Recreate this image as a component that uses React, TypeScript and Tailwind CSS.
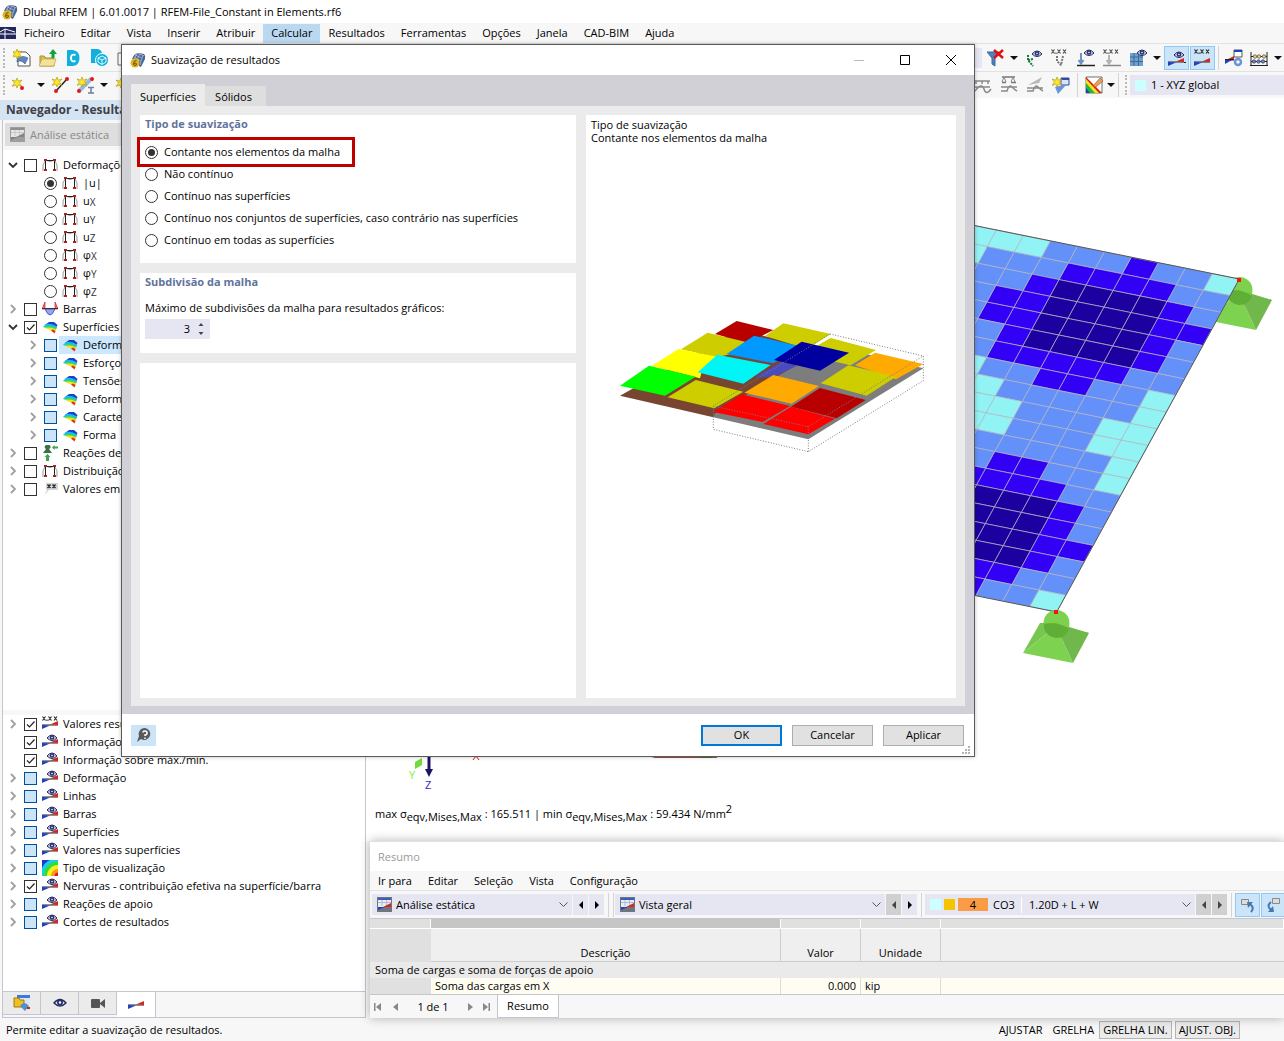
import { ReactNode } from "react";
import clsx from "clsx";

type IconName =
  | "frame"
  | "surface"
  | "eye"
  | "xxx"
  | "bars"
  | "reaction"
  | "flag"
  | "contour";

type TNode = {
  label: ReactNode;
  name: string;
  icon: IconName;
  level?: 0 | 1;
  open?: boolean;
  leaf?: boolean;
  radio?: boolean;
  checked?: boolean;
  partial?: boolean;
  selected?: boolean;
};

const MENU = [
  "Ficheiro",
  "Editar",
  "Vista",
  "Inserir",
  "Atribuir",
  "Calcular",
  "Resultados",
  "Ferramentas",
  "Opções",
  "Janela",
  "CAD-BIM",
  "Ajuda",
];

const sub = (a: string, b: string) => (
  <>
    {a}
    <span className="align-[-1px] text-[10px] text-[#333]">{b}</span>
  </>
);

const RESULTS: TNode[] = [
  { label: "Deformações globais", name: "def", icon: "frame", open: true },
  { label: "|u|", name: "u", icon: "frame", level: 1, radio: true, checked: true },
  { label: sub("u", "X"), name: "ux", icon: "frame", level: 1, radio: true },
  { label: sub("u", "Y"), name: "uy", icon: "frame", level: 1, radio: true },
  { label: sub("u", "Z"), name: "uz", icon: "frame", level: 1, radio: true },
  { label: sub("φ", "X"), name: "px", icon: "frame", level: 1, radio: true },
  { label: sub("φ", "Y"), name: "py", icon: "frame", level: 1, radio: true },
  { label: sub("φ", "Z"), name: "pz", icon: "frame", level: 1, radio: true },
  { label: "Barras", name: "bar", icon: "bars" },
  { label: "Superfícies", name: "sup", icon: "surface", open: true, checked: true },
  { label: "Deformações", name: "s1", icon: "surface", level: 1, partial: true, selected: true },
  { label: "Esforços", name: "s2", icon: "surface", level: 1, partial: true },
  { label: "Tensões", name: "s3", icon: "surface", level: 1, partial: true },
  { label: "Deformações", name: "s4", icon: "surface", level: 1, partial: true },
  { label: "Características", name: "s5", icon: "surface", level: 1, partial: true },
  { label: "Forma", name: "s6", icon: "surface", level: 1, partial: true },
  { label: "Reações de apoio", name: "rea", icon: "reaction" },
  { label: "Distribuição", name: "dis", icon: "frame" },
  { label: "Valores em", name: "val", icon: "flag" },
];

const DISPLAY: TNode[] = [
  { label: "Valores resultantes", name: "d1", icon: "xxx", checked: true },
  { label: "Informação", name: "d2", icon: "eye", checked: true, leaf: true },
  { label: "Informação sobre máx./mín.", name: "d3", icon: "eye", checked: true, leaf: true },
  { label: "Deformação", name: "d4", icon: "eye", partial: true },
  { label: "Linhas", name: "d5", icon: "eye", partial: true },
  { label: "Barras", name: "d6", icon: "eye", partial: true },
  { label: "Superfícies", name: "d7", icon: "eye", partial: true },
  { label: "Valores nas superfícies", name: "d8", icon: "eye", partial: true },
  { label: "Tipo de visualização", name: "d9", icon: "contour", partial: true },
  {
    label: "Nervuras - contribuição efetiva na superfície/barra",
    name: "d10",
    icon: "eye",
    checked: true,
  },
  { label: "Reações de apoio", name: "d11", icon: "eye", partial: true },
  { label: "Cortes de resultados", name: "d12", icon: "eye", partial: true },
];

const SMOOTHING = [
  "Contante nos elementos da malha",
  "Não contínuo",
  "Contínuo nas superfícies",
  "Contínuo nos conjuntos de superfícies, caso contrário nas superfícies",
  "Contínuo em todas as superfícies",
];

// one string per mesh row, read from the right edge to the left
const MESH = [
  "cbbpbbbccccc",
  "bbppppbbbccc",
  "bpddddpbbbbb",
  "ppddddppbbbb",
  "bpddddppbbbb",
  "bpddddpbbbbb",
  "bbpppppbbbbb",
  "cbbppbbccccc",
  "cbbbbbcccccc",
  "ccbbbccccccc",
  "ccbbbccccccc",
  "cbbbbbbccccc",
  "cbbppbbbbbbb",
  "bbpppppbbbbb",
  "bpdddddpbbbb",
  "bpdddddpbbbb",
  "ppdddddpbbbb",
  "bpddddppbbbb",
  "bbpppppbbbbb",
  "cbbppbbbbbbb",
];

const MESH_FILL: Record<string, string> = {
  c: "#91f3f3",
  b: "#6491f9",
  p: "#3200f5",
  d: "#1c00a0",
};

const PLATES: [string, string][] = [
  ["#b90000", "410,63 520,90 465,118 430,125 345,102"],
  ["#cdcd00", "550,70 692,102 640,135 590,137 495,108"],
  ["#cdcd00", "692,114 828,150 752,196 640,170 655,135"],
  ["#cdcd00", "323,98 435,125 390,163 350,172 243,148"],
  ["#ffaa00", "825,158 970,192 888,238 765,196"],
  ["#4b4bc0", "465,232 545,185 590,198 520,230"],
  ["#0099ff", "462,107 605,140 520,190 380,162"],
  ["#0000a0", "605,125 747,158 660,212 522,180"],
  ["#ffff00", "235,147 360,172 305,215 300,235 155,198"],
  ["#00f5f5", "352,164 512,195 430,251 293,217"],
  ["#cdcd00", "745,196 888,230 800,287 662,250"],
  ["#00ff00", "147,197 287,230 195,287 60,257"],
  ["#cdcd00", "287,240 430,275 343,325 203,292"],
  ["#ffaa00", "520,225 657,258 575,311 433,278"],
  ["#ff0000", "425,283 570,318 488,366 340,336"],
  ["#b90000", "660,264 797,300 710,355 573,320"],
  ["#ff0000", "573,320 705,356 625,403 490,372"],
];

function Eye({ x = 0, y = 0 }: { x?: number; y?: number }) {
  return (
    <g transform={`translate(${x} ${y})`}>
      <path d="M0 4Q5 -2 10 4Q5 9 0 4Z" fill="#c9cde6" stroke="#23285c" />
      <circle cx="5" cy="3.5" r="2.3" fill="#2a3172" />
      <circle cx="5" cy="3.5" r=".8" fill="#fff" />
    </g>
  );
}

function Wedge({ y = 0 }: { y?: number }) {
  return (
    <g transform={`translate(0 ${y})`}>
      <path d="M0 6.500H16V5.500H0Z" fill="#222" />
      <path d="M8 5.500L16 2V6Z" fill="#d2281e" />
      <path d="M0 6L8 6.500L0 10Z" fill="#2340c0" />
    </g>
  );
}

// the "x.xx" mark of the value icons
function Digits({ color = "#222" }: { color?: string }) {
  return (
    <path
      d="M.5 .5L3.500 4.500M3.500 .5L.5 4.500M5 3.500V5M6.500 .5L9.500 4.500M9.500 .5L6.500 4.500M12 .5L15 4.500M15 .5L12 4.500"
      stroke={color}
      strokeWidth="1.100"
      fill="none"
    />
  );
}

function TreeIcon({ icon }: { icon: IconName }) {
  return (
    <svg viewBox="0 0 16 16" className="h-4 w-4 shrink-0" aria-hidden>
      {icon === "frame" && (
        <>
          <path d="M1 14Q0 7 3 4M15 14Q16 7 13 4M3 3Q8 6 13 3" fill="none" stroke="#9a9a9a" />
          <path d="M3.500 13V3.500H12.500V13" fill="none" stroke="#222" />
          <path d="M2 2h3v2H2zM11 2h3v2h-3zM2 12h3v2H2zM11 12h3v2h-3z" fill="#b02020" />
        </>
      )}
      {icon === "surface" && (
        <>
          <path d="M3 6L7 3H12L15.500 6L14 9Z" fill="#1c40c8" />
          <path d="M1 8L4 5Q10 4 15 7.500L14.500 9.500L8 9Z" fill="#18b8f0" />
          <path d="M1 8Q8 5.500 14.500 9L14 11L8 9.500Z" fill="#3cdc50" />
          <path d="M3 9Q9 7.500 14 10.500L13.500 12.500L9 11.500Z" fill="#f5e11e" />
          <path d="M9 11.500L11 10.500L13.500 12L12.500 14.500Z" fill="#e03018" />
        </>
      )}
      {(icon === "eye" || icon === "xxx") && <Wedge y={3} />}
      {icon === "eye" && <Eye x={5} y={0} />}
      {icon === "xxx" && <Digits />}
      {icon === "bars" && (
        <>
          <path d="M0 8L3 8V1ZM16 8L13 8V1Z" fill="#f07070" stroke="#c82020" strokeWidth=".7" />
          <path d="M3 8Q8 20 13 8Z" fill="#9aa4f0" stroke="#3040c0" strokeWidth=".8" />
          <path d="M0 7.500H16" stroke="#333" />
        </>
      )}
      {icon === "reaction" && (
        <g fill="#3aa655">
          <path d="M6 0A2 2 0 0 1 7 4L10 8H1L4 4A2 2 0 0 1 6 0Z" fill="#3c7048" />
          <path d="M10 2.500L12.500 0V1.500H16V3.500H12.500V5Z" />
          <path d="M5.500 9L8.500 12H7V16H4V12H2.500Z" />
        </g>
      )}
      {icon === "flag" && (
        <>
          <path d="M4 2H16V9H7L2 15L5 9H4Z" fill="#d6d6d6" />
          <path
            d="M5.500 3.500L8.500 7M8.500 3.500L5.500 7M10.500 3.500L13.500 7M13.500 3.500L10.500 7"
            stroke="#222"
            strokeWidth="1.300"
          />
        </>
      )}
      {icon === "contour" && (
        <>
          <rect width="16" height="16" fill="#2038d8" />
          <circle cx="16" cy="16" r="18" fill="#18d0e8" />
          <circle cx="16" cy="16" r="14.500" fill="#32dc3c" />
          <circle cx="16" cy="16" r="11" fill="#f5f01e" />
          <circle cx="16" cy="16" r="7" fill="#f59a1e" />
          <circle cx="16" cy="16" r="3.500" fill="#e02010" />
        </>
      )}
    </svg>
  );
}

function AppIcon() {
  return (
    <svg viewBox="0 0 16 16" className="h-4 w-4 shrink-0" aria-hidden>
      <path d="M2 7Q4 1 9 1L14 2Q16 4 15 7L11 15L9 14L9 8Z" fill="#4a6590" />
      <path
        d="M5 3L12 6M8 1L14 4M4 5L11 9M7 2L4 7M10 2L7 8M13 3L10 13"
        stroke="#b8c8e0"
        strokeWidth=".7"
      />
      <circle cx="5" cy="11" r="4.500" fill="#e0b428" />
      <path
        d="M6.500 8.500Q3.500 8.500 3.500 11.500Q3.500 13.500 5 13.500Q6.500 13.500 6.500 12T3.800 11.500"
        fill="none"
        stroke="#6b5000"
      />
    </svg>
  );
}

function Caret() {
  return (
    <svg viewBox="0 0 8 4" className="h-1 w-2 shrink-0" aria-hidden>
      <path d="M0 0H8L4 4Z" fill="#111" />
    </svg>
  );
}

function Star({ x = 5, y = 5 }: { x?: number; y?: number }) {
  return (
    <path
      transform={`translate(${x} ${y})`}
      d="M0 -5L1.300 -1.800L5 -3L2.500 0L5 3.500L1.300 2L0 5L-1.300 2L-5 3.500L-2.500 0L-5 -3L-1.300 -1.800Z"
      fill="#ffe628"
      stroke="#a89000"
      strokeWidth=".6"
    />
  );
}

type ToolProps = {
  label: string;
  className?: string;
  active?: boolean;
  children: ReactNode;
};

function Tool({ label, className = "w-[26px]", active, children }: ToolProps) {
  return (
    <button
      type="button"
      aria-label={label}
      className={clsx(
        "flex h-6 shrink-0 items-center justify-center",
        active && "border border-[#90c8f6] bg-[#cbe4f8]",
        className
      )}
    >
      {children}
    </button>
  );
}

function Pic({ children, wide }: { children: ReactNode; wide?: boolean }) {
  return (
    <svg
      viewBox={wide ? "0 0 18 18" : "0 0 16 16"}
      className={wide ? "h-[18px] w-[18px]" : "h-4 w-4"}
      fill="none"
      aria-hidden
    >
      {children}
    </svg>
  );
}

const Sep = ({ className = "mx-[3px]" }: { className?: string }) => (
  <span className={clsx("h-6 w-px shrink-0 bg-[#d4d4d4]", className)} />
);

const Grip = () => (
  <span className="mx-[3px] h-5 w-0 shrink-0 border-l-2 border-dotted border-[#b8b8b8]" />
);

function MainToolbar() {
  return (
    <div className="flex h-7 items-center border-t border-[#e2e2e2]">
      <Grip />
      <Tool label="Novo" className="ml-px w-[26px]">
        <Pic wide>
          <path d="M5 3H13L17 7V17H5Z" fill="#fff" stroke="#555" />
          <path
            d="M4 11Q8 5 15 9L12 15Q8 10 4 13Z"
            fill="#5d86c2"
            stroke="#34588e"
            strokeWidth=".6"
          />
          <Star x={4} y={5} />
        </Pic>
      </Tool>
      <Tool label="Abrir">
        <Pic wide>
          <path d="M1 17V7H5L7 9H15V17Z" fill="#d8c050" stroke="#a8902c" />
          <path d="M0 17L3 10H17L15 17Z" fill="#f2e29a" stroke="#b8a03c" strokeWidth=".6" />
          <path d="M14 0L18 5H15.500V9H12.500V5H10Z" fill="#12a040" />
        </Pic>
      </Tool>
      <Tool label="Dlubal Center" className="w-6">
        <Pic>
          <path d="M2 0H8Q14.500 1 14.500 8T8 16H2Z" fill="#10b0dc" />
          <path d="M10.500 5Q6 3.500 6 8T10.500 11" stroke="#fff" strokeWidth="2" />
        </Pic>
      </Tool>
      <Tool label="Modelos" className="w-7">
        <Pic wide>
          <path d="M1 0H8Q13 1 12 8L6 14H1Z" fill="#10b0dc" />
          <circle cx="12" cy="11" r="6.500" fill="#10b0dc" stroke="#fff" />
          <path
            d="M12 7L16 9V13L12 15.500L8 13V9ZM8 9L12 11L16 9M12 11V15"
            stroke="#e8f8fd"
          />
        </Pic>
      </Tool>
      <Tool label="Bloco" className="w-5">
        <Pic>
          <path d="M3 3H15V15H3Z" fill="#fff" stroke="#666" />
        </Pic>
      </Tool>
      <div className="flex flex-1 items-center justify-end">
        <span className="mr-[3px] h-5 w-3 bg-[#e6e6f2]" />
        <Tool label="Filtro" className="w-[22px]">
          <Pic wide>
            <path d="M0 3H12L8 9V17L5 15V9Z" fill="#4f81bd" stroke="#3a6aa5" />
            <path d="M7 1L16 9M16 1L7 9" stroke="#e01010" strokeWidth="2.500" />
          </Pic>
        </Tool>
        <Tool label="Mais filtros" className="w-[14px]">
          <Caret />
        </Tool>
        <Tool label="Mostrar cargas">
          <Pic wide>
            <Eye x={7} y={1} />
            <path
              d="M3 6V11L8 17M3 11L8 10"
              stroke="#16783c"
              strokeWidth="2"
              strokeDasharray="2 1"
            />
          </Pic>
        </Tool>
        <Tool label="Valores das cargas">
          <Pic wide>
            <Digits color="#444" />
            <path
              d="M6 7V12L11 17M12 7L10 16"
              stroke="#777"
              strokeWidth="2"
              strokeDasharray="2 1"
            />
          </Pic>
        </Tool>
        <Tool label="Mostrar reações">
          <Pic wide>
            <Eye x={7} y={0} />
            <path d="M4 4V13M1.500 11L4 14.500L6.500 11" stroke="#6c94c0" strokeWidth="2" />
            <path d="M0 16.500H18" stroke="#222" strokeWidth="1.500" />
          </Pic>
        </Tool>
        <Tool label="Valores das reações">
          <Pic wide>
            <Digits color="#444" />
            <path d="M6 6V13M3.500 11L6 14.500L8.500 11" stroke="#b4b4b4" strokeWidth="2" />
            <path d="M0 16.500H18" stroke="#888" strokeWidth="1.500" />
          </Pic>
        </Tool>
        <Tool label="Malha">
          <Pic wide>
            <path d="M1 4H14V17H1Z" fill="#6da0cc" />
            <path d="M1 8H14M1 12.500H14M5 4V17M9.500 4V17" stroke="#3d6a94" />
            <Eye x={8} y={0} />
          </Pic>
        </Tool>
        <Tool label="Opções da malha" className="w-3">
          <Caret />
        </Tool>
        <Tool label="Mostrar resultados" active className="ml-px w-[25px]">
          <Pic wide>
            <Wedge y={7} />
            <path d="M16 13.500H18" stroke="#222" />
            <Eye x={6} y={2} />
          </Pic>
        </Tool>
        <Tool label="Mostrar valores" active className="ml-px w-[25px]">
          <Pic wide>
            <Digits />
            <Wedge y={7} />
          </Pic>
        </Tool>
        <Sep />
        <Tool label="Configurar resultados" className="w-6">
          <Pic wide>
            <path d="M9 1H17V8H9Z" fill="#fff" stroke="#555" />
            <path d="M9 1H17V3H9Z" fill="#2340c0" />
            <path d="M0 10H9V11.500H0Z" fill="#222" />
            <path d="M3 10H9V7Z" fill="#d2281e" />
            <path d="M0 11H7L0 15Z" fill="#2340c0" />
            <circle cx="13" cy="13" r="3" stroke="#6a94d8" strokeWidth="2.500" />
          </Pic>
        </Tool>
        <Tool label="Ábaco" className="w-[26px]">
          <Pic wide>
            <path d="M1 3V17M17 3V17M1 7.500H17M1 12.500H17M0 16.500H18" stroke="#222" />
            <g fill="#f0d880" stroke="#444" strokeWidth=".7">
              <circle cx="5" cy="7.500" r="1.700" />
              <circle cx="9" cy="7.500" r="1.700" />
              <circle cx="14" cy="7.500" r="1.700" />
            </g>
            <g fill="#6a8ae0" stroke="#333" strokeWidth=".7">
              <circle cx="4" cy="12.500" r="1.700" />
              <circle cx="8.500" cy="12.500" r="1.700" />
              <circle cx="13" cy="12.500" r="1.700" />
            </g>
          </Pic>
        </Tool>
        <Tool label="Mais" className="w-3">
          <Caret />
        </Tool>
      </div>
    </div>
  );
}

function InsertToolbar() {
  return (
    <div className="flex h-[27px] items-center border-t border-[#e2e2e2]">
      <Grip />
      <Tool label="Novo nó" className="w-6">
        <Pic>
          <Star x={5} y={6} />
          <circle cx="10" cy="11" r="2" fill="#e01818" />
        </Pic>
      </Tool>
      <Tool label="Opções do nó" className="w-[18px]">
        <Caret />
      </Tool>
      <Tool label="Nova linha" className="w-5">
        <Pic wide>
          <path d="M5 15L16 3" stroke="#222" strokeWidth="1.500" />
          <Star x={6} y={6} />
          <circle cx="5" cy="15" r="2" fill="#e01818" />
          <circle cx="16" cy="3" r="2" fill="#e01818" />
        </Pic>
      </Tool>
      <Tool label="Nova barra" className="ml-[6px] w-5">
        <Pic wide>
          <path d="M2 15L14 3" stroke="#9db8dc" strokeWidth="4" />
          <Star x={5} y={6} />
          <circle cx="2" cy="15" r="2" fill="#e01818" />
          <circle cx="15" cy="3" r="2" fill="#e01818" />
          <path
            d="M11 11.500H17M11 17H17M14 11.500V17"
            stroke="#6a80a8"
            strokeWidth="1.500"
          />
        </Pic>
      </Tool>
      <Tool label="Opções da barra" className="w-4">
        <Caret />
      </Tool>
      <Tool label="Nova superfície" className="w-5">
        <Pic>
          <Star x={7} y={6} />
        </Pic>
      </Tool>
      <div className="flex flex-1 items-center justify-end">
        <Tool label="Apoio linear">
          <Pic wide>
            <path
              d="M0 5H16M0 11H16M2 5V8M8 5V8M14 5V8M1 15Q8 6 10 13T17 13"
              stroke="#8a8a8a"
              strokeWidth="1.500"
            />
          </Pic>
        </Tool>
        <Tool label="Apoio de superfície">
          <Pic wide>
            <path d="M2 1H15M2 6.500H6M11 6.500H16" stroke="#777" strokeWidth="1.500" />
            <path d="M4 1L2 6M4 1L6 6M13 1L11 6M13 1L15 6" stroke="#8a8a8a" />
            <path d="M1 11H17M1 15H7Q9 8 12 11T17 15" stroke="#8a8a8a" strokeWidth="1.500" />
          </Pic>
        </Tool>
        <Tool label="Secção">
          <Pic wide>
            <path d="M2 9L16 1L13 7Z" fill="#b8b8b8" />
            <path
              d="M1 15H7Q9 8 12 11T17 15M1 12H17"
              stroke="#8a8a8a"
              strokeWidth="1.500"
            />
          </Pic>
        </Tool>
        <Tool label="Novo corte">
          <Pic wide>
            <path d="M9 2H17V9H9Z" fill="#d8e4f8" stroke="#3448a0" />
            <path d="M9 2H17V4H9Z" fill="#3448a0" />
            <path d="M3 11L15 8L6 18Z" fill="#6a94e0" />
            <Star x={5} y={6} />
          </Pic>
        </Tool>
        <Sep />
        <Tool label="Escala de cores">
          <Pic wide>
            <path d="M1 1H17V17H1Z" fill="#fff" stroke="#333" strokeWidth=".7" />
            <path d="M1 1V17H17Z" fill="#e02010" />
            <path d="M1 3L14 17H1Z" fill="#f5e11e" />
            <path d="M1 7L10 17H1Z" fill="#22b83c" />
            <path d="M1 12L5 17H1Z" fill="#2340c0" />
            <path
              d="M8 10L15 2L18 5L11 11Z"
              fill="#e8a060"
              stroke="#a05020"
              strokeWidth=".6"
            />
          </Pic>
        </Tool>
        <Tool label="Opções de cores" className="w-2">
          <Caret />
        </Tool>
        <Sep />
        <Grip />
        <button
          type="button"
          className="flex h-5 w-[154px] items-center bg-[#e6e6f2] pl-[5px] text-left"
        >
          <span className="mr-[5px] h-[11px] w-[11px] bg-[#ccffff]" />1 - XYZ global
        </button>
      </div>
    </div>
  );
}

function Chevron({ open, hidden }: { open?: boolean; hidden?: boolean }) {
  return (
    <svg
      viewBox="0 0 14 14"
      className={clsx("mr-[2px] h-[14px] w-[14px] shrink-0", hidden && "invisible")}
      fill="none"
      aria-hidden
    >
      {open ? (
        <path d="M3 5L7 9L11 5" stroke="#333" strokeWidth="1.800" />
      ) : (
        <path d="M5 3L9 7L5 11" stroke="#a0a0a0" strokeWidth="1.800" />
      )}
    </svg>
  );
}

function Check({ id, checked, partial }: { id: string; checked?: boolean; partial?: boolean }) {
  return (
    <span className="grid shrink-0">
      <input
        id={id}
        type="checkbox"
        defaultChecked={checked}
        className={clsx(
          "peer col-start-1 row-start-1 h-[13px] w-[13px] appearance-none border",
          partial ? "border-[#00509b] bg-[#cce4f7]" : "border-[#333] bg-white"
        )}
      />
      <svg
        viewBox="0 0 13 13"
        className="pointer-events-none invisible col-start-1 row-start-1 h-[13px] w-[13px] peer-checked:visible"
        fill="none"
        aria-hidden
      >
        <path d="M3 6.500L5.500 9L10.500 3.500" stroke="#222" strokeWidth="1.200" />
      </svg>
    </span>
  );
}

function Radio({ id, name, checked }: { id: string; name: string; checked?: boolean }) {
  return (
    <input
      id={id}
      type="radio"
      name={name}
      defaultChecked={checked}
      className="h-[13px] w-[13px] shrink-0 appearance-none rounded-full border border-[#333] bg-white bg-clip-content p-[2px] checked:bg-[#333]"
    />
  );
}

function TreeRow({ node }: { node: TNode }) {
  const id = `tree-${node.name}`;
  return (
    <li
      className={clsx(
        "flex h-[18px] items-center gap-[2px] whitespace-nowrap",
        node.level === 1 ? "pl-[23px]" : "pl-[3px]"
      )}
    >
      <Chevron open={node.open} hidden={node.leaf || node.radio} />
      {node.radio ? (
        <Radio id={id} name="deformation" checked={node.checked} />
      ) : (
        <Check id={id} checked={node.checked} partial={node.partial} />
      )}
      <label
        htmlFor={id}
        className={clsx(
          "flex h-[18px] flex-1 items-center gap-[5px] pl-[3px]",
          node.selected && "bg-[#cce8ff]"
        )}
      >
        <TreeIcon icon={node.icon} />
        <span>{node.label}</span>
      </label>
    </li>
  );
}

function ResultIcon({ gray }: { gray?: boolean }) {
  return (
    <svg
      viewBox="0 0 15 15"
      className={clsx("h-[15px] w-[15px] shrink-0", gray && "opacity-60 grayscale")}
      aria-hidden
    >
      <rect width="15" height="15" fill="#707680" />
      <path d="M1 1H14V10H1Z" fill="#e8ecf4" />
      <path d="M1 1H14V3H1Z" fill="#3c5cc0" />
      <path d="M1 5.500H14M5 3V9M9.500 3V9" stroke="#b4bccc" />
      <path d="M14 6V10H6Z" fill="#d2281e" />
      <path d="M1 10H8L1 13Z" fill="#2340c0" />
    </svg>
  );
}

function Navigator() {
  const tab =
    "flex h-[23px] w-[38px] items-center justify-center border-r border-b border-[#c5c5d0] bg-[#ebebeb]";
  return (
    <aside className="flex w-[366px] shrink-0 flex-col pt-[2px]">
      <h2 className="h-5 bg-[#d5e4f2] pl-[6px] text-[12px] leading-5 font-bold text-[#404048]">
        Navegador - Resultados
      </h2>
      <div className="ml-[2px] flex flex-1 flex-col border-x border-b border-[#c5c5d0] bg-white">
        <div className="bg-[#f7f7f7] px-[2px] pt-[3px] pb-1">
          <button
            type="button"
            disabled
            className="flex h-[23px] w-full items-center gap-[5px] bg-[#dedede] pl-[5px] text-[#888]"
          >
            <ResultIcon gray />
            Análise estática
          </button>
        </div>
        <ul className="flex-1 pt-[6px]">
          {RESULTS.map((n) => (
            <TreeRow key={n.name} node={n} />
          ))}
        </ul>
        <div className="h-[5px] bg-[#f7f7f7]" />
        <ul className="pb-[60px]">
          {DISPLAY.map((n) => (
            <TreeRow key={n.name} node={n} />
          ))}
        </ul>
        <div className="flex h-[26px] items-start border-t border-[#c5c5d0] bg-[#f7f7f7]">
          <button type="button" aria-label="Dados" className={tab}>
            <Pic wide>
              <path d="M4 1H17V11H4Z" fill="#dde6f8" />
              <path d="M4 1H17V4H4Z" fill="#3c78e0" />
              <path d="M1 4H6L7 6H11V13H1Z" fill="#f0c020" stroke="#a07808" />
              <path d="M7 12Q11 6 16 12L12 17Z" fill="#5090d0" />
              <path d="M14 13H17V15H14Z" fill="#e01818" />
            </Pic>
          </button>
          <button type="button" aria-label="Exibir" className={tab}>
            <Pic>
              <path
                d="M2 8Q8 1 14 8Q8 14 2 8Z"
                fill="#dfe3f2"
                stroke="#23285c"
                strokeWidth="1.300"
              />
              <circle cx="8" cy="7.500" r="3" fill="#2a3172" />
              <circle cx="8" cy="7.500" r="1.200" fill="#fff" />
            </Pic>
          </button>
          <button type="button" aria-label="Vistas" className={tab}>
            <Pic>
              <rect x="1" y="4" width="9" height="9" rx="1" fill="#555" />
              <path d="M10 8L15 4V13L10 9Z" fill="#555" />
            </Pic>
          </button>
          <button
            type="button"
            aria-label="Resultados"
            className="flex h-[25px] w-[39px] items-center justify-center border-r border-[#c5c5d0] bg-white"
          >
            <Pic>
              <Wedge y={2} />
            </Pic>
          </button>
        </div>
      </div>
    </aside>
  );
}

function meshPoint(i: number, j: number) {
  const x = 1239.3 - 27 * i - 9.13 * j;
  const y = 279 - 5.45 * i + 16.65 * j;
  return `${x.toFixed(1)},${y.toFixed(1)}`;
}

function Support({ dx = 0, dy = 0 }: { dx?: number; dy?: number }) {
  return (
    <g transform={`translate(${dx} ${dy})`}>
      <path d="M1040 623L1056 623L1089 633L1056 640Z" fill="#70b84b" />
      <path d="M1056 626L1040 623L1023 653Z" fill="#78c64f" />
      <path d="M1056 626L1023 653L1073 663Z" fill="#7dd350" />
      <path d="M1056 626L1073 663L1089 633Z" fill="#70b84b" />
      <circle cx="1056.500" cy="623" r="13" fill="#6fcc3c" fillOpacity=".9" />
      <path d="M1044 624Q1057 621 1069 629A13 13 0 0 1 1044 628Z" fill="#5fae35" />
    </g>
  );
}

function Model() {
  return (
    <svg
      viewBox="966 98 318 743"
      className="col-start-1 row-start-1 h-[743px] w-[318px] justify-self-end"
      role="img"
      aria-label="Tensões na superfície"
    >
      <Support dx={183} dy={-333} />
      {MESH.map((row, j) =>
        row.split("").map((c, i) => (
          <polygon
            key={`${i}-${j}`}
            points={[
              meshPoint(i, j),
              meshPoint(i + 1, j),
              meshPoint(i + 1, j + 1),
              meshPoint(i, j + 1),
            ].join(" ")}
            fill={MESH_FILL[c]}
            stroke="#b4b4be"
            strokeWidth=".7"
          />
        ))
      )}
      <polyline
        points={[meshPoint(12, 0), meshPoint(0, 0), meshPoint(0, 20), meshPoint(12, 20)].join(" ")}
        fill="none"
        stroke="#555"
      />
      <Support />
      <rect x="1237" y="278" width="4" height="4" fill="#f01414" />
      <rect x="1054" y="610" width="4" height="4" fill="#f01414" />
    </svg>
  );
}

function Viewport() {
  return (
    <div className="grid flex-1 overflow-hidden bg-white">
      <Model />
      <div className="col-start-1 row-start-1 self-end pb-[15px] pl-[9px]">
        <svg viewBox="375 740 360 55" className="h-[55px] w-[360px]" aria-hidden>
          <path d="M429 740V770" stroke="#1c1464" strokeWidth="3" />
          <path d="M425 769H433L429 777Z" fill="#1c1464" />
          <path d="M422 758L415 762V769L422 765Z" fill="#6fdc3c" />
          <path d="M648 756H720L716 758H655Z" fill="#a05050" />
          <path d="M698 756H712V758H700Z" fill="#507020" />
          <path d="M473 760L476 756L479 760" stroke="#e01818" fill="none" />
          <text x="409" y="779" fontSize="11" fill="#7cf03c">
            Y
          </text>
          <text x="425" y="789" fontSize="11" fill="#3c28c8">
            Z
          </text>
        </svg>
        <p className="mt-[7px] h-6 leading-6 whitespace-nowrap">
          max σ<sub className="text-[11px]">eqv,Mises,Max</sub> : 165.511 | min σ
          <sub className="text-[11px]">eqv,Mises,Max</sub> : 59.434 N/mm
          <sup className="text-[11px]">2</sup>
        </p>
      </div>
    </div>
  );
}

function Arrow({ left, dim }: { left?: boolean; dim?: boolean }) {
  return (
    <button
      type="button"
      aria-label={left ? "Anterior" : "Seguinte"}
      className={clsx(
        "mr-px flex h-[21px] w-[15px] shrink-0 items-center justify-center",
        dim ? "bg-[#d0d0d0]" : "bg-[#e6e6f2]"
      )}
    >
      <svg viewBox="0 0 4 8" className="h-2 w-1" aria-hidden>
        <path d={left ? "M4 0V8L0 4Z" : "M0 0V8L4 4Z"} fill={dim ? "#444" : "#000"} />
      </svg>
    </button>
  );
}

function DropMark() {
  return (
    <svg viewBox="0 0 9 5" className="mr-1 ml-auto h-[5px] w-[9px]" fill="none" aria-hidden>
      <path d="M.5 .5L4.500 4.500L8.500 .5" stroke="#555" />
    </svg>
  );
}

function SummaryPanel() {
  const combo = "mr-px flex h-[21px] shrink-0 items-center bg-[#e6e6f2] pl-[5px]";
  const pager = "flex w-[16px] items-center justify-center";
  const th = "border-r border-b border-[#cdcdcd] align-bottom font-normal";
  const td = "border-r border-[#dcdcdc]";
  return (
    <section className="z-10 ml-1 flex flex-col border-t border-[#e0e0e0] bg-[#f7f7f7] shadow-[0_0_10px_rgba(0,0,0,0.3)]">
      <h2 className="h-[29px] bg-white pl-2 leading-[30px] text-[#999]">Resumo</h2>
      <nav className="flex h-5 items-center gap-4 border-b border-[#e4e4e4] pl-2">
        {["Ir para", "Editar", "Seleção", "Vista", "Configuração"].map((m) => (
          <button key={m} type="button">
            {m}
          </button>
        ))}
      </nav>
      <div className="flex h-[27px] items-center overflow-hidden pl-[2px]">
        <button type="button" className={clsx(combo, "w-[200px]")}>
          <ResultIcon />
          <span className="ml-1">Análise estática</span>
          <DropMark />
        </button>
        <Arrow left />
        <Arrow />
        <Sep />
        <Sep className="mx-px" />
        <button type="button" className={clsx(combo, "w-[270px]")}>
          <ResultIcon />
          <span className="ml-1">Vista geral</span>
          <DropMark />
        </button>
        <Arrow left dim />
        <Arrow />
        <Sep />
        <button type="button" className={clsx(combo, "w-[270px]")}>
          <span className="h-[11px] w-[11px] bg-[#ccffff]" />
          <span className="ml-[3px] h-[11px] w-[11px] bg-[#f5c400]" />
          <span className="ml-[3px] h-[13px] w-[30px] bg-[#fa9b46] text-center leading-[13px]">
            4
          </span>
          <span className="ml-[5px] w-[29px] border-r border-white text-left">CO3</span>
          <span className="ml-[7px]">1.20D + L + W</span>
          <DropMark />
        </button>
        <Arrow left dim />
        <Arrow dim />
        <Sep />
        <Tool label="Sincronizar seleção" active className="w-[25px]">
          <Pic>
            <path d="M1.500 2.500H8.500V7.500H1.500Z" fill="#ddd" stroke="#888" />
            <path d="M11 15Q15 11 10 7" stroke="#4678b0" strokeWidth="2" />
            <path d="M7 5L13 5L8 11Z" fill="#4678b0" />
          </Pic>
        </Tool>
        <Tool label="Sincronizar vista" active className="ml-px w-[25px]">
          <Pic>
            <path d="M6.500 1.500H13.500V6.500H6.500Z" fill="#ddd" stroke="#888" />
            <path d="M5 5Q0 9 5 13" stroke="#4678b0" strokeWidth="2" />
            <path d="M8 15L2 15L7 9Z" fill="#4678b0" />
          </Pic>
        </Tool>
      </div>
      <table className="w-full table-fixed border-separate border-spacing-0 border-y border-[#c5c5d0]">
        <colgroup>
          <col className="w-[61px]" />
          <col className="w-[350px]" />
          <col className="w-[80px]" />
          <col className="w-[80px]" />
          <col />
        </colgroup>
        <thead>
          <tr className="h-[10px] bg-[#e0e0e0]">
            {["a", "b", "c", "d", "e"].map((k) => (
              <td
                key={k}
                className={clsx("border-r border-b border-white", k === "b" && "bg-[#c6c6c6]")}
              />
            ))}
          </tr>
          <tr className="h-[33px] bg-[#efefef]">
            <td className="bg-[#e0e0e0]" />
            <th className={th}>Descrição</th>
            <th className={th}>Valor</th>
            <th className={th}>Unidade</th>
            <td className="border-b border-[#cdcdcd]" />
          </tr>
        </thead>
        <tbody>
          <tr className="h-4 bg-[#eaeaea]">
            <td colSpan={5} className="pl-[5px] leading-4 whitespace-nowrap">
              Soma de cargas e soma de forças de apoio
            </td>
          </tr>
          <tr className="h-4 bg-[#fffdf2]">
            <td className="bg-[#e0e0e0]" />
            <td className={clsx(td, "pl-1 leading-4")}>Soma das cargas em X</td>
            <td className={clsx(td, "pr-1 text-right leading-4")}>0.000</td>
            <td className={clsx(td, "pl-1 leading-4")}>kip</td>
            <td />
          </tr>
        </tbody>
      </table>
      <div className="flex h-[23px] items-stretch">
        <button type="button" aria-label="Primeira" className={pager}>
          <svg viewBox="0 0 8 8" className="h-2 w-2" fill="#888" aria-hidden>
            <path d="M0 0H1.500V8H0ZM7 0V8L2 4Z" />
          </svg>
        </button>
        <button type="button" aria-label="Página anterior" className={clsx(pager, "ml-[2px]")}>
          <svg viewBox="0 0 8 8" className="h-2 w-2" fill="#888" aria-hidden>
            <path d="M6 0V8L1 4Z" />
          </svg>
        </button>
        <span className="w-[58px] self-center text-center">1 de 1</span>
        <button type="button" aria-label="Página seguinte" className={pager}>
          <svg viewBox="0 0 8 8" className="h-2 w-2" fill="#888" aria-hidden>
            <path d="M2 0V8L7 4Z" />
          </svg>
        </button>
        <button type="button" aria-label="Última" className={pager}>
          <svg viewBox="0 0 8 8" className="h-2 w-2" fill="#888" aria-hidden>
            <path d="M1 0V8L6 4ZM6.500 0H8V8H6.500Z" />
          </svg>
        </button>
        <button
          type="button"
          className="ml-[3px] w-[62px] border-r border-b border-l border-[#c5c5d0] bg-white"
        >
          Resumo
        </button>
      </div>
    </section>
  );
}

function Preview() {
  return (
    <svg viewBox="0 0 1050 510" className="h-[170px] w-[350px]" role="img" aria-label="Malha">
      <polygon points="60,287 340,352 690,150 410,90" fill="#784630" />
      <polygon points="340,352 625,418 970,205 690,135 345,340" fill="#7d7d7d" />
      {PLATES.map(([fill, points]) => (
        <polygon key={points} points={points} fill={fill} />
      ))}
      <path
        d="M690 102L970 168V242L625 455L340 388V318L690 102M340 318L625 380L970 168M625 380V455"
        fill="none"
        stroke="#7c7c84"
        strokeWidth="3"
        strokeDasharray="3 5"
      />
    </svg>
  );
}

function SmoothingDialog() {
  const button = "h-[21px] w-[81px] bg-[#e1e1e1]";
  return (
    <div
      role="dialog"
      aria-label="Suavização de resultados"
      className="absolute top-[44px] left-[121px] z-20 flex h-[713px] w-[854px] flex-col border border-[#5a5a5a] bg-white shadow-[0_0_4px_rgba(0,0,0,0.25)]"
    >
      <header className="flex h-[30px] items-center pl-2">
        <AppIcon />
        <h1 className="ml-[5px]">Suavização de resultados</h1>
        <div className="ml-auto flex">
          <button type="button" aria-label="Minimizar" className="flex w-[46px] justify-center">
            <svg viewBox="0 0 10 10" className="h-[10px] w-[10px]" aria-hidden>
              <path d="M0 5.500H10" stroke="#bbb" />
            </svg>
          </button>
          <button type="button" aria-label="Maximizar" className="flex w-[46px] justify-center">
            <svg viewBox="0 0 10 10" className="h-[10px] w-[10px]" aria-hidden>
              <path d="M.5 .5H9.500V9.500H.5Z" stroke="#000" fill="none" />
            </svg>
          </button>
          <button type="button" aria-label="Fechar" className="flex w-[46px] justify-center">
            <svg viewBox="0 0 10 10" className="h-[10px] w-[10px]" aria-hidden>
              <path d="M0 0L10 10M10 0L0 10" stroke="#000" />
            </svg>
          </button>
        </div>
      </header>
      <div className="flex flex-1 flex-col bg-[#d0d0d6] px-[9px] pt-[9px] pb-2">
        <div role="tablist" className="flex h-[22px] items-end">
          <button
            role="tab"
            aria-selected
            type="button"
            className="h-[22px] w-[74px] bg-[#ebebeb] pt-1"
          >
            Superfícies
          </button>
          <button
            role="tab"
            aria-selected={false}
            type="button"
            className="h-5 w-[61px] bg-[#dedede] pt-[2px] pr-1"
          >
            Sólidos
          </button>
        </div>
        <div className="flex flex-1 gap-[10px] bg-[#ebebeb] p-[9px] pb-2">
          <div className="flex w-[436px] flex-col gap-[10px]">
            <fieldset className="h-[148px] bg-white pl-[5px]">
              <legend className="float-left h-[20px] w-full leading-[17px] font-bold text-[#5f739d]">
                Tipo de suavização
              </legend>
              <div className="flex w-full flex-col pt-[6px]">
                {SMOOTHING.map((s, i) => (
                  <div key={s} className="flex h-[22px] items-center">
                    <Radio id={`smooth-${i}`} name="smoothing" checked={i === 0} />
                    <label htmlFor={`smooth-${i}`} className="ml-[6px]">
                      {s}
                    </label>
                  </div>
                ))}
              </div>
            </fieldset>
            <section className="h-20 bg-white pl-[5px]">
              <h2 className="leading-[17px] font-bold text-[#5f739d]">Subdivisão da malha</h2>
              <label htmlFor="subdivisions" className="mt-2 block leading-5">
                Máximo de subdivisões da malha para resultados gráficos:
              </label>
              <div className="mt-px flex h-5 w-[65px] items-center bg-[#e6e6f2]">
                <input
                  id="subdivisions"
                  type="text"
                  defaultValue="3"
                  className="w-[45px] bg-transparent text-right outline-none"
                />
                <svg viewBox="0 0 6 14" className="ml-2 h-[14px] w-[6px]" fill="#444" aria-hidden>
                  <path d="M3 1L5.500 4H.5ZM3 13L.5 10H5.500Z" />
                </svg>
              </div>
            </section>
            <div className="flex-1 bg-white" />
          </div>
          <div className="flex flex-1 flex-col bg-white pt-[3px] pl-[5px] leading-[13px]">
            <p>Tipo de suavização</p>
            <p>Contante nos elementos da malha</p>
            <div className="mt-[156px] pl-[9px]">
              <Preview />
            </div>
          </div>
        </div>
      </div>
      <footer className="flex h-[42px] items-center pr-[10px] pl-[9px]">
        <button
          type="button"
          aria-label="Ajuda"
          className="flex h-[21px] w-[25px] items-center justify-center bg-[#cce4f7]"
        >
          <svg viewBox="0 0 16 16" className="h-4 w-4" fill="none" aria-hidden>
            <path d="M9 1A6 6 0 1 1 5 12L1 15L3 9A6 6 0 0 1 9 1Z" fill="#5a5a5a" />
            <path
              d="M7 5.500Q7 4 9 4T11 6T9 8V9M9 10.500V12"
              stroke="#fff"
              strokeWidth="1.500"
            />
          </svg>
        </button>
        <div className="ml-auto flex gap-[10px]">
          <button type="button" className={clsx(button, "border-2 border-[#0078d7]")}>
            OK
          </button>
          <button type="button" className={clsx(button, "border border-[#adadad]")}>
            Cancelar
          </button>
          <button type="button" className={clsx(button, "border border-[#adadad]")}>
            Aplicar
          </button>
        </div>
      </footer>
      {/* size grip */}
      <svg
        viewBox="0 0 8 8"
        className="absolute right-1 bottom-[2px] h-2 w-2"
        fill="#b4b4b4"
        aria-hidden
      >
        <path d="M6 0h2v2H6zM3 3h2v2H3zM6 3h2v2H6zM0 6h2v2H0zM3 6h2v2H3zM6 6h2v2H6z" />
      </svg>
      {/* highlight around the chosen option */}
      <div className="pointer-events-none absolute top-[92px] left-[15px] h-[30px] w-[218px] border-3 border-[#c00000]" />
    </div>
  );
}

export default function App() {
  return (
    <div className="relative flex min-h-screen flex-col overflow-hidden bg-[#f7f7f7] font-['Open_Sans','Noto_Sans',sans-serif] text-[11px] leading-4 text-black">
      <header className="flex h-[23px] items-center gap-[5px] bg-white pl-[2px]">
        <AppIcon />
        Dlubal RFEM | 6.01.0017 | RFEM-File_Constant in Elements.rf6
      </header>
      <nav className="flex h-5 items-center">
        <svg viewBox="0 0 16 12" className="h-3 w-4" fill="none" aria-hidden>
          <rect width="16" height="12" fill="#23285c" />
          <path d="M0 5L5 2L15 5M0 7H16M5 2V12" stroke="#fff" />
        </svg>
        {MENU.map((m) => (
          <button
            key={m}
            type="button"
            className={clsx("h-[19px] px-2", m === "Calcular" && "bg-[#bad8f0]")}
          >
            {m}
          </button>
        ))}
      </nav>
      <MainToolbar />
      <InsertToolbar />
      <div className="flex flex-1">
        <Navigator />
        <main className="flex min-w-0 flex-1 flex-col">
          <Viewport />
          <SummaryPanel />
        </main>
      </div>
      <footer className="flex h-6 items-center border-b border-[#222] pr-[44px] pl-[6px]">
        <span>Permite editar a suavização de resultados.</span>
        <div className="ml-auto flex items-center">
          <button type="button" className="px-[5px]">
            AJUSTAR
          </button>
          <button type="button" className="px-[5px]">
            GRELHA
          </button>
          <button type="button" className="h-[18px] border border-[#b4b4b4] bg-[#ebebeb] px-[3px]">
            GRELHA LIN.
          </button>
          <button
            type="button"
            className="ml-[3px] h-[18px] border border-[#b4b4b4] bg-[#ebebeb] px-[3px]"
          >
            AJUST. OBJ.
          </button>
        </div>
      </footer>
      <SmoothingDialog />
    </div>
  );
}
